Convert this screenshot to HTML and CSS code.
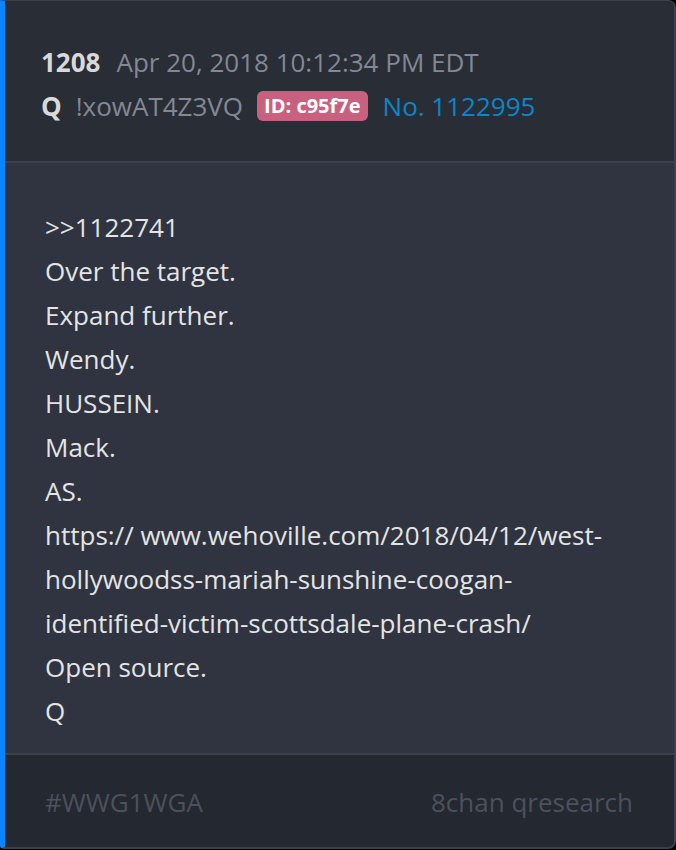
FILE: index.html
```html
<!DOCTYPE html>
<html>
<head>
<meta charset="utf-8">
<link rel="stylesheet" href="styles.css">
</head>
<body>
<div class="card">
  <div class="head">
    <div class="row"><span class="num">1208</span><span class="date">Apr 20, 2018 10:12:34 PM EDT</span></div>
    <div class="row"><span class="name">Q</span><span class="trip">!xowAT4Z3VQ</span><span class="badge">ID: c95f7e</span><span class="no">No. 1122995</span></div>
  </div>
  <div class="body">
    <p>&gt;&gt;1122741<br>Over the target.<br>Expand further.<br>Wendy.<br>HUSSEIN.<br>Mack.<br>AS.<br>https:// www.wehoville.com/2018/04/12/west-<br>hollywoodss-mariah-sunshine-coogan-<br>identified-victim-scottsdale-plane-crash/<br>Open source.<br>Q</p>
  </div>
  <div class="foot">
    <span>#WWG1WGA</span><span>8chan qresearch</span>
  </div>
</div>
</body>
</html>
```

FILE: styles.css
```css
html, body {
  margin: 0;
  padding: 0;
  background: #000;
}
body {
  width: 676px;
  height: 850px;
  font-family: "Open Sans", sans-serif;
}
.card {
  box-sizing: border-box;
  width: 676px;
  height: 849px;
  border: 1px solid #3c414d;
  border-right-width: 2px;
  border-bottom-width: 2px;
  border-left: 5px solid #0a84ff;
  border-radius: 0 8px 8px 4px;
  overflow: hidden;
  display: flex;
  flex-direction: column;
  background: #2f3440;
}
.head {
  background: #292d36;
  padding: 39px 0 33px 36px;
  border-bottom: 2px solid #3c414d;
}
.row {
  display: flex;
  align-items: center;
  height: 44px;
  font-size: 26px;
}
.num {
  font-weight: 700;
  color: #d9d9d9;
  margin-right: 16px;
}
.date {
  color: #838895;
}
.name {
  font-weight: 700;
  color: #d9d9d9;
  margin-right: 14px;
}
.trip {
  color: #838895;
  margin-right: 14px;
}
.badge {
  background: #c8617f;
  color: #fff;
  font-weight: 700;
  font-size: 20px;
  line-height: 30px;
  padding: 0 7px;
  border-radius: 6px;
  margin-right: 15px;
}
.no {
  color: #0b86c9;
}
.body {
  flex: 1;
  padding: 42px 30px 0 40px;
}
.body p {
  margin: 0;
  font-size: 26px;
  line-height: 44px;
  color: #e4e4e4;
}
.foot {
  background: #242830;
  border-top: 2px solid #3c414d;
  height: 94px;
  box-sizing: border-box;
  display: flex;
  justify-content: space-between;
  align-items: center;
  padding: 2px 41px 0 40px;
  font-size: 26px;
  color: #4c515c;
}
```
